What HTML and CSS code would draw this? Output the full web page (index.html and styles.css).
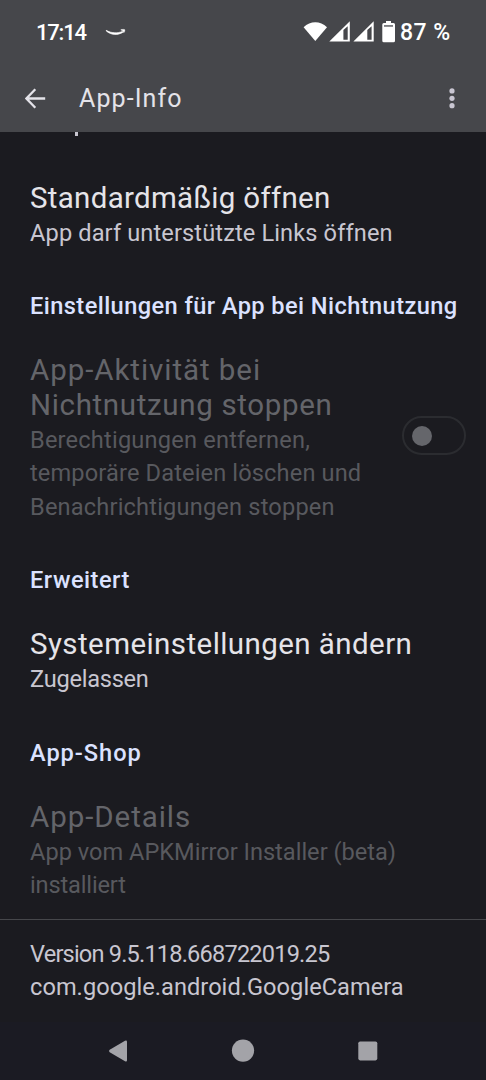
FILE: index.html
```html
<!DOCTYPE html>
<html lang="de">
<head>
<meta charset="utf-8">
<title>App-Info</title>
<link rel="stylesheet" href="styles.css">
</head>
<body>
<div class="screen">
  <header class="top">
    <div class="status">
      <span class="clock">17:14</span>
      <svg class="smile" width="22" height="10" viewBox="0 0 22 10"><path d="M1.2 2.3C6.5 5.4 12.5 5.4 17.4 3.4L18.2 4.2C12.5 7.6 5.8 7.3 1 2.7Z" fill="#fff" stroke="#fff" stroke-width=".6"/><path d="M15.8 1.8C17.4 1.3 19.3 1.2 19.8 1.8C20 3 19.5 3.9 18.9 4.6L17.6 2.8Z" fill="#fff" stroke="#fff" stroke-width=".5"/></svg>
      <svg class="signals" width="94" height="24" viewBox="0 0 94 24" fill="#fff">
        <path d="M.6 7.2C7.4.6 17.2.6 24 7.2L12.3 21Z"/>
        <path fill-rule="evenodd" d="M26.3 21.5L46.8 1.3V21.5ZM40.4 10V19.7H44.7V6.3Z"/>
        <path fill-rule="evenodd" d="M50.4 21.5L70.7 1.3V21.5ZM64.3 10V19.7H68.6V6.3Z"/>
        <path d="M83 1H88V3H90.5Q92 3 92 4.5V20.8Q92 22.3 90.5 22.3H80.8Q79.3 22.3 79.3 20.8V4.5Q79.3 3 80.8 3H83Z"/>
        <path d="M81 5.3H90V6.6H81Z" fill="#46474b"/>
      </svg>
      <span class="percent">87 %</span>
    </div>
    <div class="bar">
      <svg class="back" width="22" height="22" viewBox="0 0 22 22" fill="none" stroke="#e4e3e9" stroke-width="2.3"><path d="M10.3 1.2L1.4 10.5L10.3 19.8M1.6 10.5H20.2"/></svg>
      <h1>App-Info</h1>
      <svg class="more" width="6" height="22" viewBox="0 0 6 22" fill="#c9c6d2"><circle cx="3" cy="2.9" r="2.6"/><circle cx="3" cy="10.3" r="2.6"/><circle cx="3" cy="17.7" r="2.6"/></svg>
    </div>
  </header>
  <main>
    <div class="clipped"><i></i></div>
    <section class="item first">
      <div class="title t-open">Standardmäßig öffnen</div>
      <div class="sub s-open">App darf unterstützte Links öffnen</div>
    </section>
    <h2 class="h-unused">Einstellungen für App bei Nichtnutzung</h2>
    <section class="item row off">
      <div>
        <div class="title"><span class="t-act">App-Aktivität bei</span><br><span class="t-stop">Nichtnutzung stoppen</span></div>
        <div class="sub"><span class="s-perm">Berechtigungen entfernen,</span><br><span class="s-temp">temporäre Dateien löschen und</span><br><span class="s-note">Benachrichtigungen stoppen</span></div>
      </div>
      <div class="switch"><i></i></div>
    </section>
    <h2 class="h-adv">Erweitert</h2>
    <section class="item">
      <div class="title t-sys">Systemeinstellungen ändern</div>
      <div class="sub s-allow">Zugelassen</div>
    </section>
    <h2 class="h-shop">App-Shop</h2>
    <section class="item off">
      <div class="title t-det">App-Details</div>
      <div class="sub">App vom APKMirror Installer (beta)<br><span class="s-inst">installiert</span></div>
    </section>
    <footer class="sub"><span class="s-ver">Version 9.5.118.668722019.25</span><br><span class="s-pkg">com.google.android.GoogleCamera</span></footer>
  </main>
  <nav>
    <svg width="20" height="22" viewBox="0 0 20 22" fill="#a3a3a8"><path d="M1.7 9.8L17 .7Q19 0 19 1.8V20.2Q19 22 17 21.2L1.7 12.2Q.1 11 1.7 9.8Z"/></svg>
    <svg width="24" height="24" viewBox="0 0 24 24" fill="#a3a3a8"><circle cx="12" cy="11.6" r="11.1"/></svg>
    <svg width="20" height="20" viewBox="0 0 20 20" fill="#a3a3a8"><rect x=".3" y=".4" width="19" height="19" rx="1.8"/></svg>
  </nav>
</div>
</body>
</html>
```
FILE: styles.css
```css
* { box-sizing: border-box; }
body { margin: 0; background: #1b1b20; font-family: Roboto, "Noto Sans", sans-serif; }
.screen { height: 1080px; display: flex; flex-direction: column; overflow: hidden; }
.top { height: 132px; background: #46474b; flex: none; }
.status { height: 64px; display: flex; align-items: center; padding: 2px 35px 0; color: #fff; font-size: 22px; font-weight: 500; line-height: 26px; }
.clock { width: 70px; padding-left: 1px; letter-spacing: -1.2px; }
.smile { margin-top: -1px; }
.signals { margin: -2px 3px 0 auto; }
.percent { width: 51px; font-size: 23px; letter-spacing: .5px; white-space: nowrap; }
.bar { height: 68px; display: flex; align-items: center; padding: 1px 31.5px 0 25px; }
h1 { margin: 0 auto 0 32px; font-size: 25px; font-weight: 400; letter-spacing: 1.1px; color: #e4e3e9; }
main { flex: 1; }
/* tail of the row that has scrolled under the app bar */
.clipped { height: 49px; padding-left: 75px; }
.clipped i { display: block; width: 2.5px; height: 4px; background: #c8c6d0; }
.item { padding: 0 20px 0 30px; margin: 30.4px 0 40.3px; }
.item.first { margin: 0 0 40px; }
.item.row { display: flex; justify-content: space-between; margin-bottom: 40.3px; }
.title { font-size: 29.5px; line-height: 35px; color: #e5e4e9; margin-bottom: .9px; white-space: nowrap; }
.sub { font-size: 23.6px; line-height: 33px; color: #c8c6d0; white-space: nowrap; }
.row .sub { line-height: 33.2px; }
h2 { margin: 0; padding-left: 30px; font-size: 23.6px; line-height: 33px; font-weight: 500; color: #dbe2ff; white-space: nowrap; }
.off .title { color: #64656a; }
.off .sub { color: #58595e; }
.switch { width: 64px; height: 39px; flex: none; margin-top: 63px; border: 2px solid #2b2c30; border-radius: 20px; display: flex; align-items: center; padding-left: 8px; }
.switch i { width: 20px; height: 20px; border-radius: 50%; background: #65666b; }
footer { border-top: 1.5px solid #46474b; margin-top: -23px; padding: 17.8px 0 0 30px; }
nav { height: 58px; flex: none; background: #1b1b23; display: flex; align-items: center; justify-content: space-between; padding: 0 108px; }
.t-open { letter-spacing: .3px; }
.s-open { letter-spacing: .12px; }
.h-unused { letter-spacing: .43px; }
.t-act, .t-det { letter-spacing: .94px; }
.t-stop { letter-spacing: .66px; }
.s-perm { letter-spacing: .2px; }
.s-temp { letter-spacing: .14px; }
.s-note { letter-spacing: .18px; }
.h-adv { letter-spacing: .51px; }
.t-sys { letter-spacing: .43px; }
.s-allow { letter-spacing: -.25px; }
.h-shop { letter-spacing: .96px; }
.s-inst { letter-spacing: -.15px; }
.s-ver { letter-spacing: -.82px; }
.s-pkg { letter-spacing: .04px; }
```
